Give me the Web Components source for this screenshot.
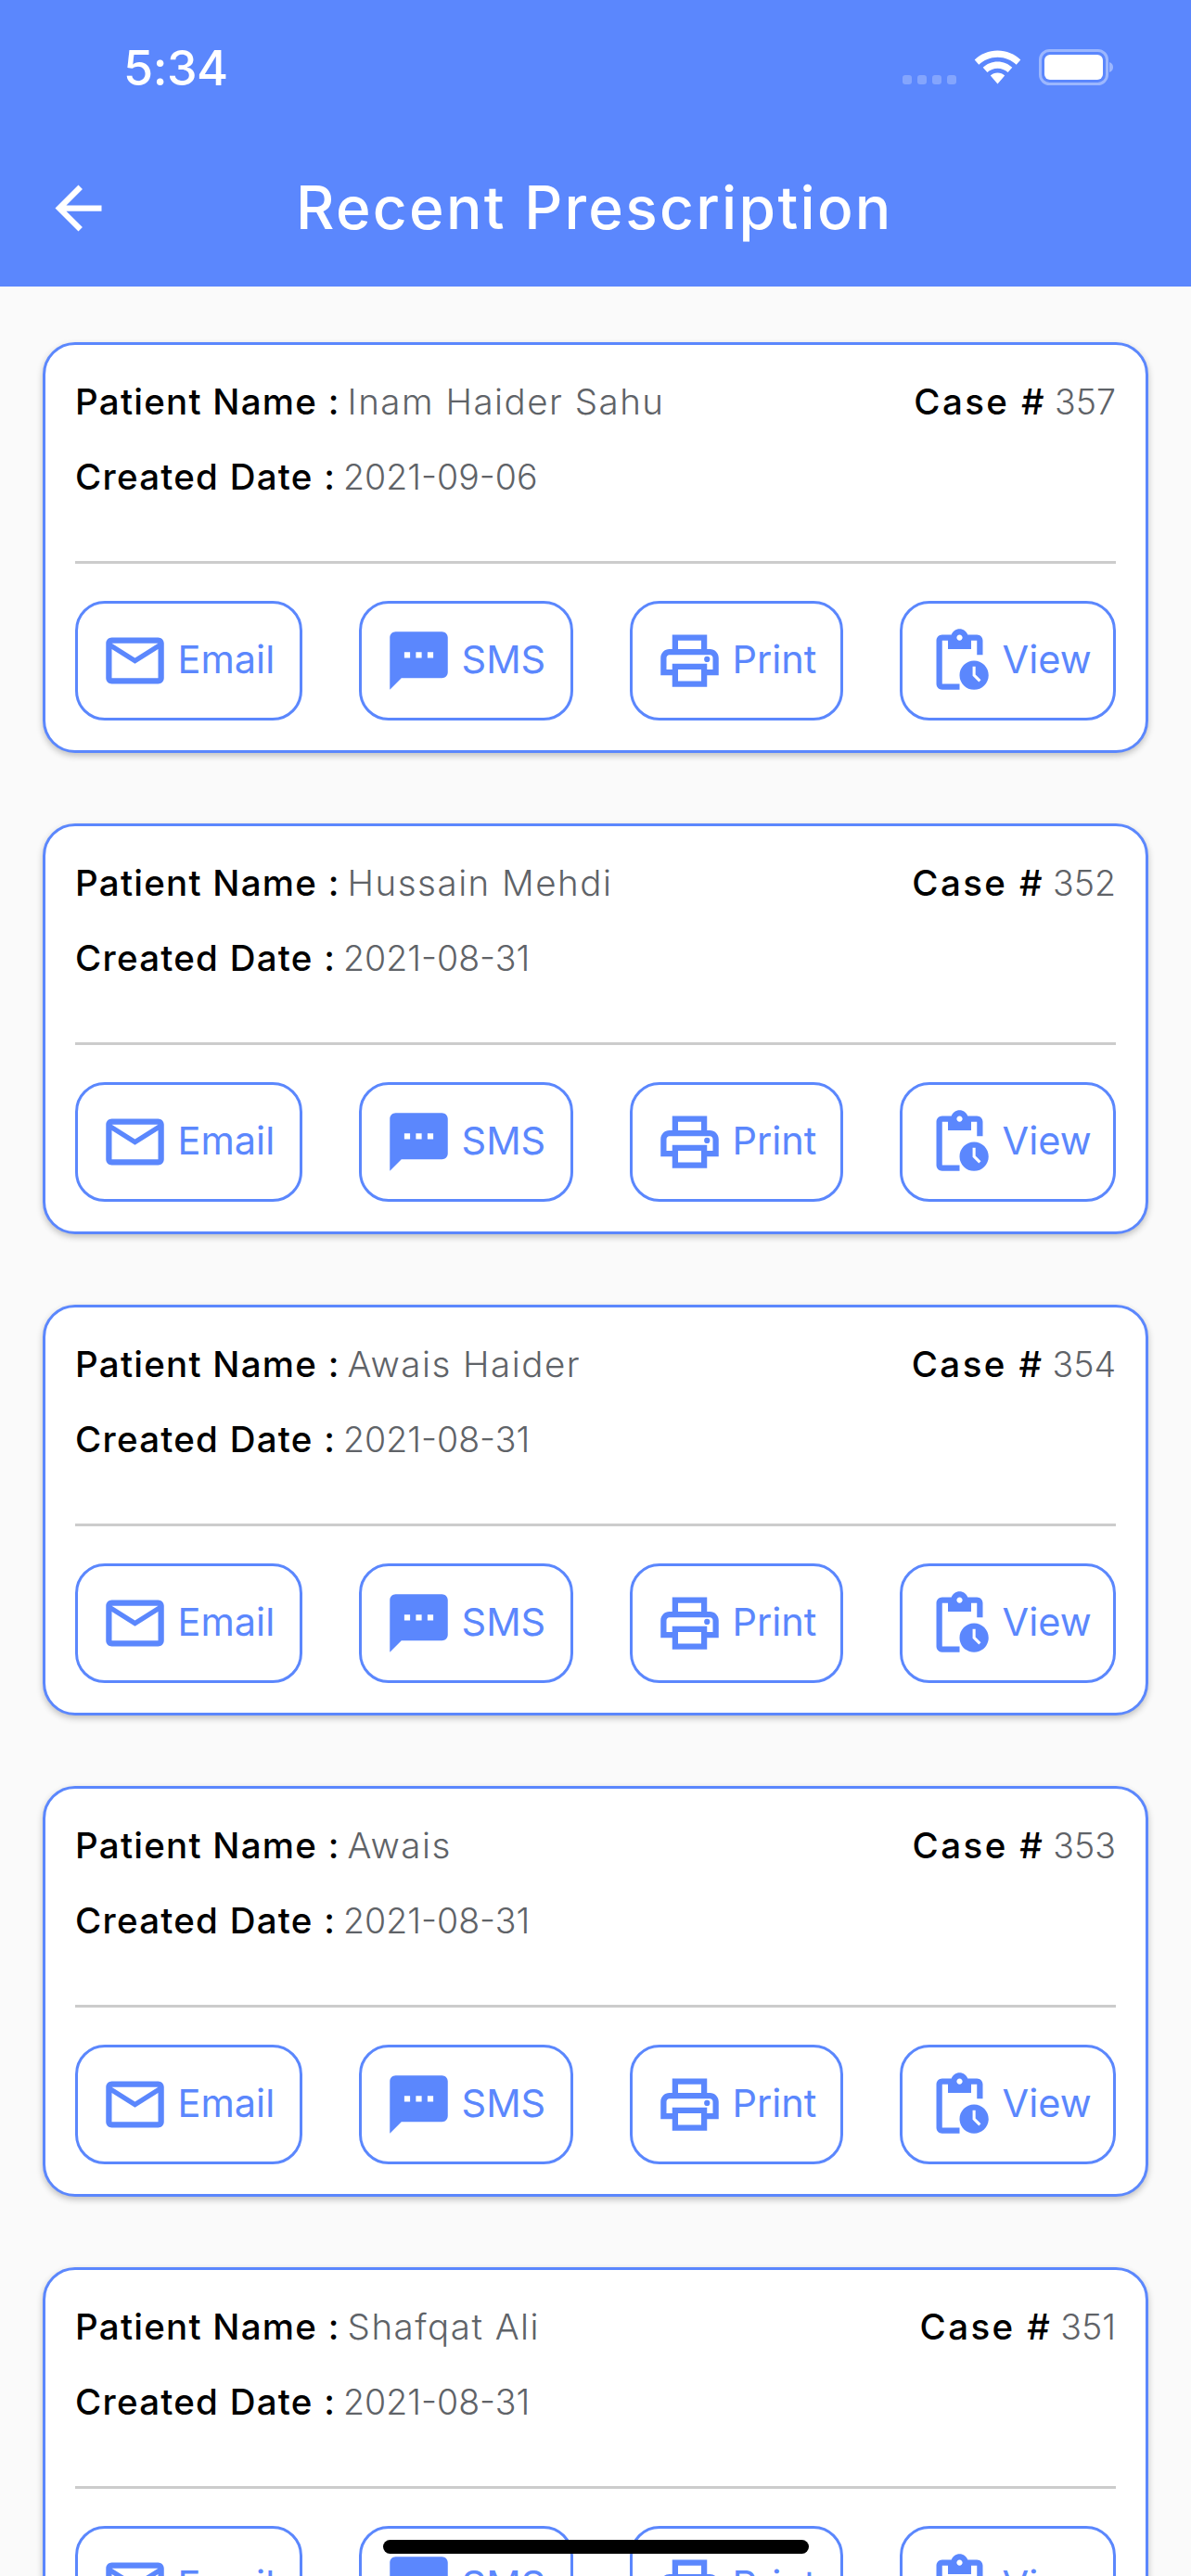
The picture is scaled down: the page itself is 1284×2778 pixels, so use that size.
<!DOCTYPE html>
<html lang="en"><head><meta charset="utf-8"><title>Recent Prescription</title>
<style>
html,body{margin:0;padding:0;height:2778px;overflow:hidden;background:#fafafa;font-family:Inter,"Liberation Sans",sans-serif}
</style></head><body>
<rx-app>
  <rx-card name="Inam Haider Sahu" case-no="357" date="2021-09-06"></rx-card>
  <rx-card name="Hussain Mehdi" case-no="352" date="2021-08-31"></rx-card>
  <rx-card name="Awais Haider" case-no="354" date="2021-08-31"></rx-card>
  <rx-card name="Awais" case-no="353" date="2021-08-31"></rx-card>
  <rx-card name="Shafqat Ali" case-no="351" date="2021-08-31"></rx-card>
</rx-app>
<script>
const ICONS={
 email:'<path d="M20 4H4c-1.1 0-1.99.9-1.99 2L2 18c0 1.1.9 2 2 2h16c1.1 0 2-.9 2-2V6c0-1.1-.9-2-2-2zm0 14H4V8l8 5 8-5v10zm-8-7L4 6h16l-8 5z"/>',
 sms:'<path d="M20 2H4c-1.1 0-1.99.9-1.99 2L2 22l4-4h14c1.1 0 2-.9 2-2V4c0-1.1-.9-2-2-2zM9 11H7V9h2v2zm4 0h-2V9h2v2zm4 0h-2V9h2v2z"/>',
 print:'<path d="M19 8h-1V3H6v5H5c-1.66 0-3 1.34-3 3v6h4v4h12v-4h4v-6c0-1.66-1.34-3-3-3zM8 5h8v3H8V5zm8 12v2H8v-4h8v2zm2-2v-2H6v2H4v-4c0-.55.45-1 1-1h14c.55 0 1 .45 1 1v4h-2z"/><circle cx="18" cy="11.5" r="1"/>',
 view:'<path d="M17 12c-2.76 0-5 2.24-5 5s2.24 5 5 5 5-2.24 5-5-2.24-5-5-5zm1.65 7.35L16.5 17.2V14h1v2.79l1.85 1.85-.7.71zM18 3h-3.18C14.4 1.84 13.3 1 12 1s-2.4.84-2.82 2H6c-1.1 0-2 .9-2 2v15c0 1.1.9 2 2 2h6v-2H6V5h2v3h8V5h2v5h2V5c0-1.1-.9-2-2-2zm-6 2c-.55 0-1-.45-1-1s.45-1 1-1 1 .45 1 1-.45 1-1 1z"/>'
};
class RxStatusBar extends HTMLElement{constructor(){super();this.attachShadow({mode:'open'}).innerHTML=`<style>
:host{display:flex;justify-content:space-between;height:132px;box-sizing:border-box;padding:44px 82px 0 133px;color:#fff}
.t{font:500 52px/60px Inter,"Liberation Sans",sans-serif;letter-spacing:-.5px}
svg{display:block;margin-top:8px}
</style><span class="t">5:34</span>
<svg width="230" height="42" viewBox="0 0 230 42" fill="none">
<g fill="#fff" fill-opacity=".25"><rect x="1" y="29" width="10" height="10" rx="3"/><rect x="17" y="29" width="10" height="10" rx="3"/><rect x="33" y="29" width="10" height="10" rx="3"/><rect x="49" y="29" width="10" height="10" rx="3"/></g>
<path transform="translate(25.500 0)" fill="#fff" d="M78 2.500c9.600 0 18.300 3.800 24.800 10l-4.600 5.200C93 12.700 85.800 9.700 78 9.700S63 12.700 57.800 17.700L53.200 12.500C59.700 6.300 68.400 2.500 78 2.500zM78 14.500c6.100 0 11.700 2.400 15.800 6.300l-4.700 5.300C86.200 23.400 82.300 21.700 78 21.700S69.800 23.400 66.900 26.100L62.200 20.800C66.300 16.900 71.900 14.500 78 14.500zM78 26.500c3 0 5.700 1.100 7.700 3L78 38.500 70.300 29.500C72.300 27.600 75 26.500 78 26.500z"/>
<rect x="149.500" y="2.500" width="72" height="36" rx="10" stroke="#fff" stroke-opacity=".4" stroke-width="3"/>
<rect x="154" y="7" width="63" height="27" rx="6" fill="#fff"/>
<path d="M224 15c3 1 4 3 4 5.500s-1 4.500-4 5.500z" fill="#fff" fill-opacity=".4"/>
</svg>`}}
class RxNavBar extends HTMLElement{constructor(){super();this.attachShadow({mode:'open'}).innerHTML=`<style>
:host{display:flex;align-items:flex-start;height:177px;box-sizing:border-box;padding:55px 0 0 47px;color:#fff}
svg{flex:none;display:block;fill:#fff}
h1{margin:-6px 0 0 197px;font:500 64px/86px Inter,"Liberation Sans",sans-serif;letter-spacing:2.3px;white-space:nowrap}
</style><svg width="75" height="75" viewBox="0 0 24 24"><path d="M20 11H7.83l5.59-5.59L12 4l-8 8 8 8 1.41-1.41L7.83 13H20v-2z"/></svg><h1>Recent Prescription</h1>`}}
class RxHeader extends HTMLElement{constructor(){super();this.attachShadow({mode:'open'}).innerHTML=`<style>
:host{display:block;background:#5b87fd}
</style><rx-status-bar></rx-status-bar><rx-nav-bar></rx-nav-bar>`}}
class RxAction extends HTMLElement{connectedCallback(){if(this.shadowRoot)return;
this.attachShadow({mode:'open'}).innerHTML=`<style>
:host{display:flex;align-items:center;box-sizing:border-box;height:129px;border:3px solid #5b87fd;border-radius:32px;padding-left:23.5px;gap:9px;background:#fff;color:#5b87fd;width:${this.getAttribute('w')}px;font:400 41.500px/50px Inter,"Liberation Sans",sans-serif}
svg{flex:none;display:block;fill:#5b87fd}
span{margin-top:-2px}
</style><svg width="75" height="75" viewBox="0 0 24 24">${ICONS[this.getAttribute('icon')]}</svg><span>${this.getAttribute('label')}</span>`}}
class RxCard extends HTMLElement{connectedCallback(){if(this.shadowRoot)return;const g=a=>this.getAttribute(a);
this.attachShadow({mode:'open'}).innerHTML=`<style>
:host{display:block;box-sizing:border-box;height:443px;background:#fff;border:3px solid #5b87fd;border-radius:35px;box-shadow:0 3px 7px rgba(0,0,0,.24);padding:33px 32px 0}
.row{display:flex;justify-content:space-between;height:56px;font:500 38.500px/56px Inter,"Liberation Sans",sans-serif;color:#000;white-space:nowrap}
.row+.row{margin-top:25px}
.v{font-weight:300;color:#5f6368;font-size:37.500px}
.l{margin-right:8px;letter-spacing:1.25px}
.n{letter-spacing:1.5px;font-size:38.500px}
.c{margin-right:9px;letter-spacing:2.4px}
hr{margin:62.500px 0 40px;border:0;height:3px;background:#cccccc}
.acts{display:flex;justify-content:space-between}
</style>
<div class="row"><span><span class="l">Patient Name :</span><span class="v n">${g('name')}</span></span><span><span class="c">Case #</span><span class="v">${g('case-no')}</span></span></div>
<div class="row"><span><span class="l">Created Date :</span><span class="v">${g('date')}</span></span></div>
<hr>
<div class="acts">
<rx-action icon="email" label="Email" w="245"></rx-action>
<rx-action icon="sms" label="SMS" w="231"></rx-action>
<rx-action icon="print" label="Print" w="230"></rx-action>
<rx-action icon="view" label="View" w="233"></rx-action>
</div>`}}
class RxApp extends HTMLElement{constructor(){super();this.attachShadow({mode:'open'}).innerHTML=`<style>
:host{display:block;position:relative;height:2778px;overflow:hidden;background:#fafafa}
main{display:flex;flex-direction:column;gap:76px;padding:60px 46px 0}
.home{position:absolute;left:413px;top:2739px;width:459px;height:15px;border-radius:8px;background:#000}
</style><rx-header></rx-header><main><slot></slot></main><div class="home"></div>`}}
customElements.define('rx-status-bar',RxStatusBar);
customElements.define('rx-nav-bar',RxNavBar);
customElements.define('rx-header',RxHeader);
customElements.define('rx-action',RxAction);
customElements.define('rx-card',RxCard);
customElements.define('rx-app',RxApp);
</script></body></html>
